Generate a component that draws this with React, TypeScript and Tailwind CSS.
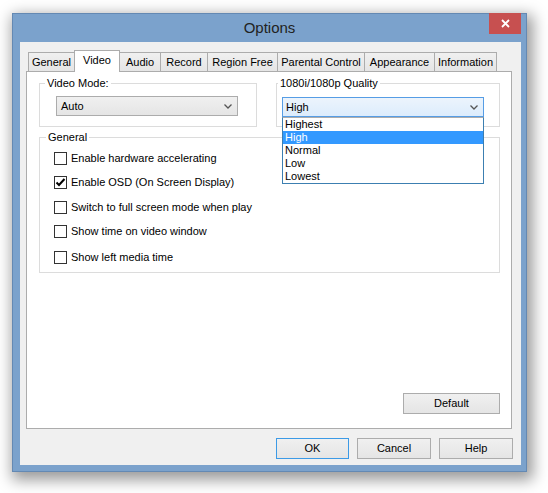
import React from "react";

const font = "font-['Liberation_Sans',Arial,sans-serif]";

const tabs = [
  { label: "General", w: "w-[47px]" },
  { label: "Video", w: "w-[46px]", active: true },
  { label: "Audio", w: "w-[42px]" },
  { label: "Record", w: "w-[48px]" },
  { label: "Region Free", w: "w-[71px]" },
  { label: "Parental Control", w: "w-[88px]" },
  { label: "Appearance", w: "w-[71px]" },
  { label: "Information", w: "w-[63px]" },
];

const options = [
  { label: "Enable hardware accelerating", checked: false, mt: "mt-[8px]" },
  { label: "Enable OSD (On Screen Display)", checked: true, mt: "mt-[11px]" },
  { label: "Switch to full screen mode when play", checked: false, mt: "mt-[12px]" },
  { label: "Show time on video window", checked: false, mt: "mt-[11px]" },
  { label: "Show left media time", checked: false, mt: "mt-[13px]" },
];

const qualities = ["Highest", "High", "Normal", "Low", "Lowest"];

function Chevron() {
  return (
    <svg width="8" height="5" viewBox="0 0 8 5" className="shrink-0">
      <path d="M0.5 0.5 L4 4 L7.5 0.5" fill="none" stroke="#555" strokeWidth="1.3" />
    </svg>
  );
}

function Checkbox({ checked }: { checked: boolean }) {
  return (
    <span className="flex h-[13px] w-[13px] shrink-0 items-center justify-center border border-[#333] bg-white">
      {checked && (
        <svg width="11" height="11" viewBox="0 0 11 11">
          <path d="M1.5 5.5 L4 8 L9.5 2" fill="none" stroke="#000" strokeWidth="2" />
        </svg>
      )}
    </span>
  );
}

function Button({ label, focused, w }: { label: string; focused?: boolean; w: string }) {
  return (
    <button
      className={`${w} h-[21px] border bg-gradient-to-b from-[#f0f0f0] to-[#e5e5e5] text-[11px] text-black leading-[13px] ${
        focused ? "border-[#3c9ae6]" : "border-[#acacac]"
      }`}
    >
      {label}
    </button>
  );
}

export default function App() {
  return (
    <div className={`w-[548px] h-[493px] bg-white pt-[13px] pl-[12px] ${font}`}>
      <div className="flex h-[459px] w-[515px] flex-col border border-[#6489b3] bg-[#7ba2cc] shadow-[3px_5px_14px_3px_rgba(0,0,0,0.4)]">
        {/* title bar */}
        <div className="relative flex h-[28px] items-center justify-center">
          <span className="text-[15px] text-[#222] pt-[1px]">Options</span>
          <div className="absolute right-[5px] -top-px flex h-[21px] w-[32px] items-center justify-center bg-[#c75050]">
            <svg width="9" height="9" viewBox="0 0 9 9">
              <path d="M1 1 L8 8 M8 1 L1 8" stroke="#fff" strokeWidth="1.8" />
            </svg>
          </div>
        </div>

        {/* client area */}
        <div className="mb-[6px] ml-[7px] mr-[5px] flex flex-1 flex-col bg-[#f0f0f0] pt-[8px] pl-[6px] text-[11px] leading-[13px] text-black">
          {/* tabs */}
          <div className="relative z-10 ml-[2px] flex h-[21px] items-end whitespace-nowrap">
            {tabs.map((t, i) =>
              t.active ? (
                <div
                  key={t.label}
                  className={`${t.w} ${i > 0 ? "-ml-px" : ""} -mb-px flex h-[22px] items-start justify-center border border-b-0 border-[#acacac] bg-white pt-[3px]`}
                >
                  {t.label}
                </div>
              ) : (
                <div
                  key={t.label}
                  className={`${t.w} ${i > 0 ? "-ml-px" : ""} flex h-[19px] items-center justify-center border border-b-0 border-[#acacac] bg-gradient-to-b from-[#f0f0f0] to-[#e5e5e5]`}
                >
                  {t.label}
                </div>
              )
            )}
          </div>

          {/* tab panel */}
          <div className="flex h-[358px] w-[486px] flex-col border border-[#acacac] bg-white">
            <div className="flex gap-[19px] pl-[12px] pt-[5px]">
              <fieldset className="h-[50px] w-[218px] border border-[#dcdcdc]">
                <legend className="ml-[5px] px-[2px] leading-[13px]">Video Mode:</legend>
                <div className="ml-[16px] mt-[6px] flex h-[20px] w-[182px] items-center justify-between border border-[#acacac] bg-gradient-to-b from-[#f0f0f0] to-[#e5e5e5] pl-[4px] pr-[5px]">
                  <span>Auto</span>
                  <Chevron />
                </div>
              </fieldset>

              <fieldset className="relative h-[50px] w-[224px] border border-[#dcdcdc]">
                <legend className="ml-[1px] px-[2px] leading-[13px]">1080i/1080p Quality</legend>
                <div className="relative ml-[5px] mt-[7px] w-[202px]">
                  <div className="flex h-[20px] items-center justify-between border border-[#569de5] bg-gradient-to-b from-[#ecf4fc] to-[#dcecfc] pl-[3px] pr-[5px]">
                    <span>High</span>
                    <Chevron />
                  </div>
                  <div className="absolute left-0 top-[20px] z-20 flex w-[202px] flex-col border border-[#3c7fb1] border-t-[#acacac] bg-white">
                    {qualities.map((q) => (
                      <div
                        key={q}
                        className={`h-[13px] pl-[2px] leading-[13px] ${
                          q === "High" ? "bg-[#3399ff] text-white" : ""
                        }`}
                      >
                        {q}
                      </div>
                    ))}
                  </div>
                </div>
              </fieldset>
            </div>

            <fieldset className="ml-[12px] mt-[4px] h-[142px] w-[461px] border border-[#dcdcdc]">
              <legend className="ml-[6px] px-[2px] leading-[13px]">General</legend>
              <div className="flex flex-col">
                {options.map((o) => (
                  <label key={o.label} className={`${o.mt} ml-[14px] flex h-[13px] items-center gap-[4px]`}>
                    <Checkbox checked={o.checked} />
                    <span className="whitespace-nowrap">{o.label}</span>
                  </label>
                ))}
              </div>
            </fieldset>

            <div className="flex-1" />
            <div className="flex justify-end pb-[14px] pr-[11px]">
              <Button label="Default" w="w-[97px]" />
            </div>
          </div>

          {/* dialog buttons */}
          <div className="mt-[9px] flex justify-end gap-[8px] pr-[8px]">
            <Button label="OK" w="w-[73px]" focused />
            <Button label="Cancel" w="w-[74px]" />
            <Button label="Help" w="w-[74px]" />
          </div>
        </div>
      </div>
    </div>
  );
}
